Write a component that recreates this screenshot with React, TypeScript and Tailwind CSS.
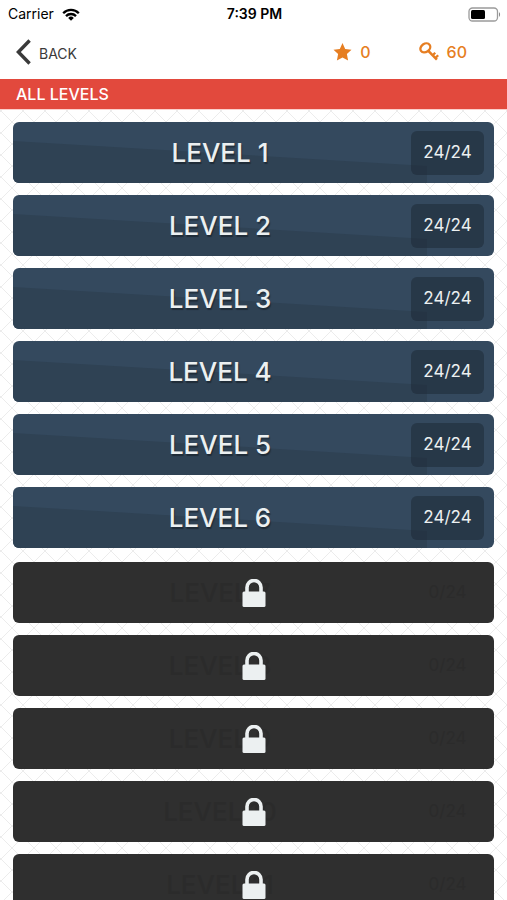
interface Level {
  id: number;
  done: number;
  total: number;
  locked: boolean;
}

const levels: Level[] = Array.from({ length: 11 }, (_, i) => ({
  id: i + 1,
  done: i < 6 ? 24 : 0,
  total: 24,
  locked: i >= 6,
}));

function StatusBar() {
  return (
    <div className="grid grid-cols-3 items-center h-7 pl-2 pr-1.5 text-sm text-black">
      <div className="flex items-center gap-2">
        <span>Carrier</span>
        <svg width="18" height="13" viewBox="0 0 18 13" fill="none" stroke="#000" strokeWidth="2.3">
          <path d="M1.2 5.2a11 11 0 0 1 15.6 0" />
          <path d="M4 8.1a7 7 0 0 1 10 0" />
          <path d="M9 12.8 6.2 9.9a4 4 0 0 1 5.6 0z" fill="#000" stroke="none" />
        </svg>
      </div>
      <div className="text-center font-semibold">7:39 PM</div>
      <svg className="justify-self-end" width="33" height="15" viewBox="0 0 33 15">
        <rect x="1" y="1" width="28.5" height="13" rx="3.5" fill="#fff" stroke="#9a9a9a" strokeWidth="1.3" />
        <rect x="3" y="3" width="14" height="9" rx="1.5" fill="#000" />
        <path d="M31 5.2c1.4.5 1.4 4.1 0 4.6z" fill="#8a8a8a" />
      </svg>
    </div>
  );
}

function TopBar() {
  return (
    <header className="flex items-center justify-between h-[51px] pl-4 pr-10 pb-1">
      <button className="flex items-center gap-2 text-sm text-[#3a3a3a]">
        <svg width="15" height="26" viewBox="0 0 15 26" fill="none" stroke="#3a3a3a" strokeWidth="3.4">
          <path d="M13.6 1.5 2.4 13l11.2 11.5" />
        </svg>
        <span className="pt-1">BACK</span>
      </button>
      <div className="flex items-center gap-12 text-base font-medium text-[#e67e22]">
        <div className="flex items-center gap-2">
          <svg width="19" height="18" viewBox="0 0 18 18" fill="#e67e22">
            <path d="M9 0l2.7 5.9 6.3.8-4.6 4.4 1.2 6.4L9 14.4l-5.6 3.1 1.2-6.4L0 6.7l6.3-.8z" />
          </svg>
          <span>0</span>
        </div>
        <div className="flex items-center gap-2">
          <svg width="20" height="19" viewBox="0 0 19 18" fill="none" stroke="#e67e22" strokeWidth="2.2">
            <ellipse cx="6" cy="5.6" rx="5" ry="3.9" transform="rotate(-35 6 5.6)" />
            <path d="M8.6 8.2l8.4 8.6" strokeWidth="2.4" />
            <path d="M13 12.6l2.4-2.4M15.6 15.2l2.6-2.6" />
          </svg>
          <span>60</span>
        </div>
      </div>
    </header>
  );
}

function LockIcon() {
  return (
    <svg width="24" height="28" viewBox="0 0 24 28" fill="none">
      <path d="M5 14V8.5a7 7 0 0 1 14 0V14" stroke="#ecf0f1" strokeWidth="3.6" />
      <rect x="0.5" y="12.5" width="23" height="15.5" rx="1.5" fill="#ecf0f1" />
    </svg>
  );
}

function LevelButton({ level }: { level: Level }) {
  const { locked } = level;
  return (
    <button
      disabled={locked}
      className={`relative flex items-center w-full h-[61px] pr-2.5 rounded-md overflow-hidden ${
        locked ? 'bg-[#2f2f2f] text-[#2b2b2b]' : 'bg-[#34495e] text-[#ecf0f1]'
      }`}
    >
      <span className="relative flex flex-1 items-center justify-center self-stretch">
        {!locked && (
          <svg className="absolute inset-0 w-full h-full" viewBox="0 0 100 100" preserveAspectRatio="none">
            <path d="M0 31 100 72V100H0z" fill="#2f4254" />
          </svg>
        )}
        <span
          className={`relative text-[26px] leading-8 font-medium ${
            locked ? '' : '[text-shadow:1px_2px_1px_rgba(0,0,0,0.35)]'
          }`}
        >
          LEVEL {level.id}
        </span>
      </span>
      <span
        className={`relative -ml-4 flex items-center justify-center w-[73px] h-11 rounded-md text-[17px] ${
          locked ? '' : 'bg-[#1e2a36]/55'
        }`}
      >
        {level.done}/{level.total}
      </span>
      {locked && (
        <span className="absolute inset-0 flex items-center justify-center">
          <LockIcon />
        </span>
      )}
    </button>
  );
}

function Lattice() {
  return (
    <svg className="absolute inset-0 w-full h-full" aria-hidden="true">
      <defs>
        <pattern id="lattice" x="1" y="1" width="22" height="22" patternUnits="userSpaceOnUse">
          <path d="M0 0 22 22M22 0 0 22" stroke="#ececec" strokeWidth="1" />
        </pattern>
      </defs>
      <rect width="100%" height="100%" fill="url(#lattice)" />
    </svg>
  );
}

export default function App() {
  const open = levels.filter((l) => !l.locked);
  const locked = levels.filter((l) => l.locked);

  return (
    <div className="flex flex-col h-screen overflow-hidden bg-white font-['Inter',sans-serif]">
      <StatusBar />
      <TopBar />
      <h1 className="flex items-center h-[31px] pl-4 bg-[#e2493d] border-b border-[#fbd0cc] text-base font-medium text-white">
        ALL LEVELS
      </h1>
      <main className="relative flex-1 overflow-hidden">
        <Lattice />
        <div className="relative flex flex-col gap-3.5 px-[13px] pt-3">
          <div className="flex flex-col gap-3">
            {open.map((l) => (
              <LevelButton key={l.id} level={l} />
            ))}
          </div>
          <div className="flex flex-col gap-3">
            {locked.map((l) => (
              <LevelButton key={l.id} level={l} />
            ))}
          </div>
        </div>
      </main>
    </div>
  );
}
